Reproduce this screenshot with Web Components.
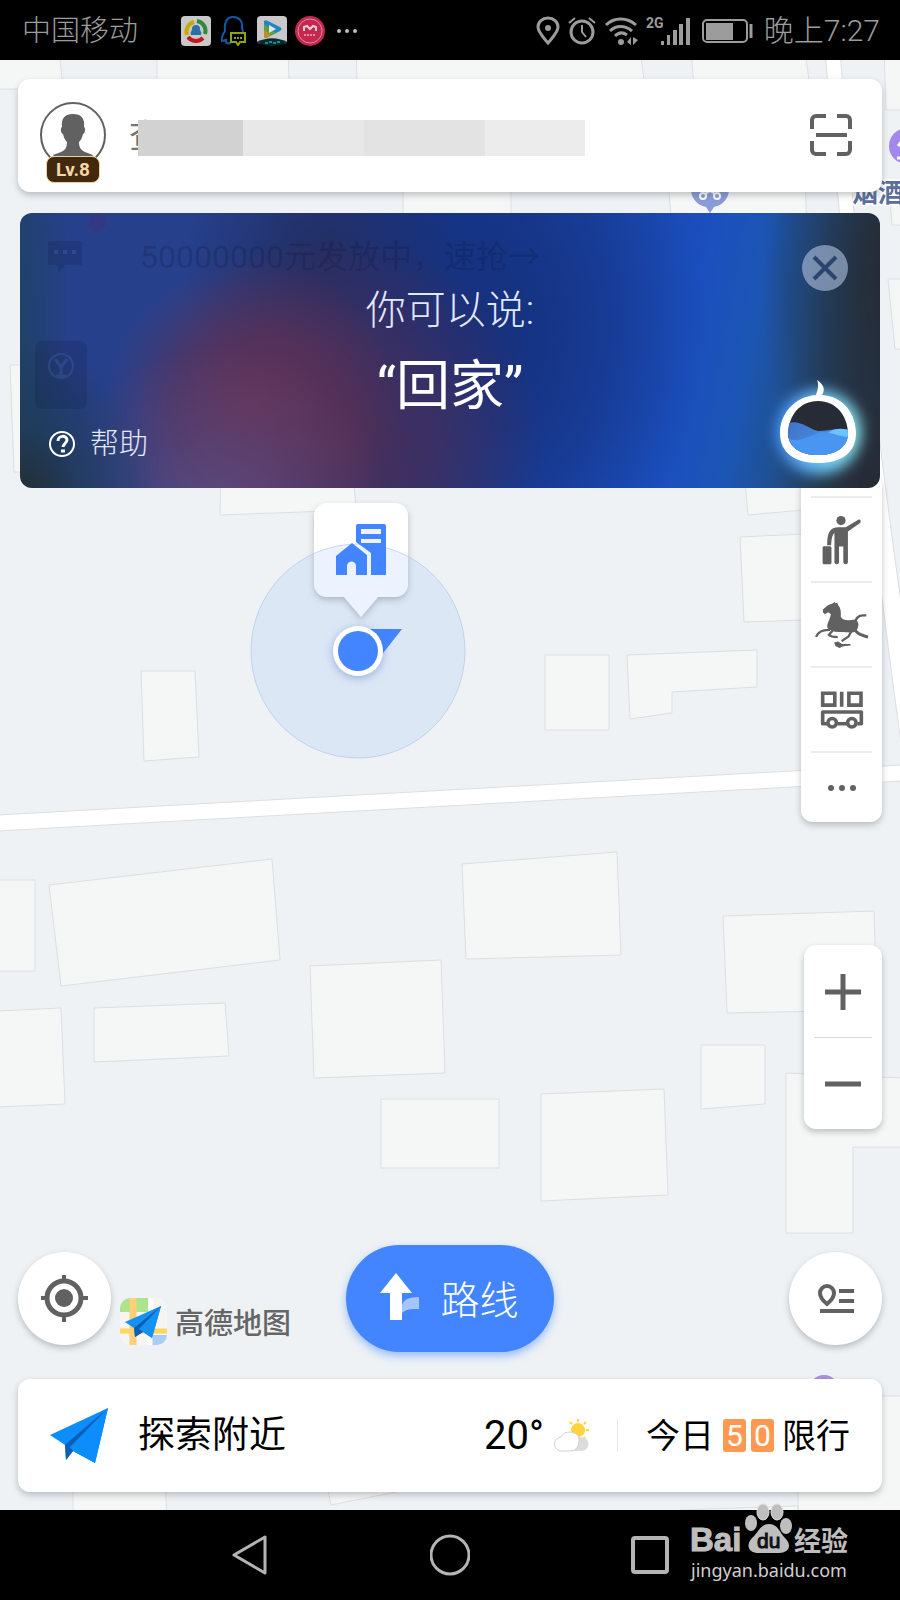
<!DOCTYPE html>
<html lang="zh-CN">
<head>
<meta charset="utf-8">
<meta name="viewport" content="width=device-width, initial-scale=1">
<title>高德地图</title>
<style>
  body {
    margin: 0;
    font-family: Roboto, "Noto Sans CJK SC", sans-serif;
    --ink: #616161;
    --accent: #4285ff;
    --card-shadow: 0 3px 6px rgba(60, 66, 74, 0.3);
  }
</style>
</head>
<body>
<amap-app></amap-app>

<script>
class BaseElement extends HTMLElement {
  constructor() {
    super();
    this.attachShadow({ mode: 'open' });
    const template = document.createElement('template');
    template.innerHTML = this.constructor.markup;
    this.shadowRoot.appendChild(template.content.cloneNode(true));
  }
}

class StatusBar extends BaseElement {
  static markup = `
<style>
  :host {
    display: flex;
    align-items: center;
    justify-content: space-between;
    box-sizing: border-box;
    height: 60px;
    padding: 2px 20px 0 22px;
    background: #000;
    color: #9c9c9c;
    font-size: 29px;
    font-weight: 300;
    line-height: 58px;
  }
  div { display: flex; align-items: center; }
  .apps { gap: 8px; margin-left: 43px; }
  .system { gap: 8px; font-size: 30px; }
  svg { display: block; }
</style>
<div>
  <span>中国移动</span>
  <div class="apps">
    <svg width="30" height="30" viewBox="0 0 30 30">
      <rect width="30" height="30" rx="4" fill="#c9c9c9"/>
      <g fill="none" stroke-width="4">
        <path d="M6 19A10 10 0 0 1 13 6" stroke="#c9a800"/>
        <path d="M16 5A10 10 0 0 1 24 18" stroke="#2f8a3c"/>
        <path d="M22 22A10 10 0 0 1 7 21" stroke="#c3161c"/>
      </g>
      <path d="M15 9a4 4 0 0 1 4 4c0 2 2 3 1 6h-10c-1-3 1-4 1-6a4 4 0 0 1 4-4z" fill="#2a6fa8"/>
    </svg>
    <svg width="30" height="30" viewBox="0 0 30 30">
      <path d="M12 27c-3 1-6 0-5-3l-4 1c-1-4 1-7 3-10C5 6 8 1 14 1s10 4 9 11l1 4" fill="none" stroke="#1258a8" stroke-width="2"/>
      <path d="M12 17h14v9h-5l-2 3-2-3h-5z" fill="#000" stroke="#8da416" stroke-width="2"/>
      <path d="M15 22h2m1 0h2m1 0h2" stroke="#8da416" stroke-width="2"/>
    </svg>
    <svg width="30" height="30" viewBox="0 0 30 30">
      <rect width="30" height="28" rx="4" fill="#c9c9c9"/>
      <path d="M7 6c0-2 2-2 4-1l12 6c2 1 2 3 0 4l-12 6c-2 1-4 1-4-1z" fill="#2384c4"/>
      <path d="M7 8v12c0 2 2 2 4 1l8-4z" fill="#57a43a"/>
      <path d="M7 14v6c0 2 2 2 4 1l3-2z" fill="#c98a25"/>
      <path d="M12 9l7 4-7 4z" fill="#e4e4e4"/>
      <path d="M0 26c10-5 20-5 30 0-4 5-26 5-30 0z" fill="#062a2c"/>
      <path d="M8 27h3m1-1h3m1 1h3m1-1h3" stroke="#198b8b" stroke-width="2"/>
    </svg>
    <svg width="30" height="30" viewBox="0 0 30 30">
      <circle cx="15" cy="15" r="15" fill="#c4284f"/>
      <circle cx="15" cy="15" r="12" fill="none" stroke="#d98aa0"/>
      <path d="M9 15v-4l3-1 3 3 3-3 3 1v4" fill="none" stroke="#e6cdd4" stroke-width="2"/>
      <path d="M9 19h12" stroke="#e08ba2" stroke-width="2" stroke-dasharray="2 1"/>
    </svg>
    <svg width="28" height="30" viewBox="0 0 28 30" fill="#bdbdbd">
      <circle cx="6" cy="15" r="2"/><circle cx="14" cy="15" r="2"/><circle cx="22" cy="15" r="2"/>
    </svg>
  </div>
</div>
<div class="system">
  <svg width="24" height="30" viewBox="0 0 24 30">
    <path d="M12 27C7 21 2 16 2 11a10 9 0 0 1 20 0c0 5-5 10-10 16z" fill="none" stroke="#9c9c9c" stroke-width="3"/>
    <circle cx="12" cy="12" r="3" fill="#9c9c9c"/>
  </svg>
  <svg width="28" height="30" viewBox="0 0 28 30" fill="none" stroke="#9c9c9c" stroke-width="3">
    <circle cx="14" cy="16" r="11"/>
    <path d="M14 9v7l4 5M1 7l6-5M27 7l-6-5" stroke-width="2"/>
  </svg>
  <svg width="34" height="30" viewBox="0 0 34 30" fill="none" stroke="#9c9c9c" stroke-width="3">
    <path d="M2 9c8-8 21-8 30 0M6 15c6-6 15-6 22 0M11 20c4-4 8-4 12-1"/>
    <circle cx="17" cy="26" r="3" fill="#9c9c9c" stroke="none"/>
    <path d="M23 26l4-5v8zM29 21v8l5-5z" fill="#9c9c9c" stroke="none"/>
  </svg>
  <svg width="44" height="30" viewBox="0 0 44 30" fill="#9c9c9c">
    <text x="0" y="12" font-size="14" font-weight="700">2G</text>
    <path d="M15 25h3v4h-3zM21 19h3v10h-3zM27 14h4v15h-4zM33 8h4v21h-4zM40 2h4v27h-4z"/>
  </svg>
  <svg width="58" height="26" viewBox="0 0 58 26">
    <rect x="5" y="2" width="44" height="22" rx="4" fill="none" stroke="#9c9c9c" stroke-width="2"/>
    <rect x="8" y="5" width="27" height="17" fill="#9c9c9c"/>
    <path d="M53 6v14" stroke="#9c9c9c" stroke-width="3"/>
  </svg>
  <span>晚上7:27</span>
</div>`;
}

class MapCanvas extends BaseElement {
  static markup = `
<style>
  :host { display: block; background: #eef2f5; }
  svg { display: block; width: 100%; height: 100%; }
</style>
<svg viewBox="0 60 900 1450" preserveAspectRatio="xMidYMid slice" role="img" aria-label="地图">
  <defs>
    <filter id="soft" x="-50%" y="-50%" width="200%" height="200%">
      <feDropShadow dx="0" dy="3" stdDeviation="3" flood-color="#3c424a" flood-opacity="0.3"/>
    </filter>
    <filter id="glow" x="-50%" y="-50%" width="200%" height="200%">
      <feDropShadow dx="0" dy="2" stdDeviation="5" flood-color="#4a70c0" flood-opacity="0.5"/>
    </filter>
  </defs>
  <!-- buildings -->
  <g fill="#f5f7f6" stroke="#dcdfe2">
    <path d="M-2 50H59L62 78V89H-2z"/>
    <path d="M157 50h131l2 60H157zM356 50h284l8 60H358zM691 50h114l8 60H696z"/>
    <path d="M403 180h108v50H403zM668 180h137l2 50H672zM884 50h20v60h-18zM890 200h12v25h-10z"/>
    <path d="M888 279h14v70h-7zM10 365h20v107H14z"/>
    <path d="M221 470h132l3 40-136 5zM744 470h70v39l-66 6zM740 537l64-3v86l-60 2z"/>
    <path d="M627 655l130-5v37l-85 5v21l-42 6zM545 655h64v75h-64zM141 671h54l4 86-55 4z"/>
    <path d="M-2 880h37v91H-2zM49 885l223-26 8 101-219 26zM462 864l155-12 4 103-155 4z"/>
    <path d="M310 966l131-6 4 113-131 5zM94 1008l131-5 4 53-135 6zM-2 1011l63-3 4 96-67 3z"/>
    <path d="M381 1099h118v69H381zM541 1094l123-5 4 106-127 6z"/>
    <path d="M723 916l151-5 3 99-150 3zM701 1045h64v59l-64 5zM786 1073l116 5v69h-49v86h-67z"/>
    <path d="M73 1480h92l2 40H73zM326 1480l5 25 100-20zM798 1396h104v124H798zM680 1510l118-4v14H680z"/>
  </g>
  <!-- roads -->
  <path d="M825 50h15c10 140 30 330 62 560v140C862 460 840 230 825 50z" fill="#fff" stroke="#dcdfe2"/>
  <path d="M-2 815l702-39 202-11v16l-202 11-702 39z" fill="#fff" stroke="#dcdfe2"/>
  <!-- places -->
  <circle cx="907" cy="146" r="18" fill="#a288ea"/>
  <path d="M898 146l6-7h8M902 146v12M897 158h8" fill="none" stroke="#fff" stroke-width="3"/>
  <text x="852" y="202" font-size="26" font-weight="700" fill="#5a6f9c" stroke="#fff" stroke-width="3" paint-order="stroke">烟酒</text>
  <path d="M691 188a19 18 0 0 0 15 19l4 6 4-6a19 18 0 0 0 15-19z" fill="#8a9cd8"/>
  <g fill="none" stroke="#fff" stroke-width="2">
    <circle cx="703" cy="196" r="3"/><circle cx="717" cy="196" r="3"/><path d="M705 194l5-3 5 3"/>
  </g>
  <circle cx="824" cy="1390" r="15" fill="#a98fe0"/>
  <!-- home callout and own position -->
  <path d="M327 503h68a13 13 0 0 1 13 13v68a13 13 0 0 1-13 13h-17l-17 20-17-20h-17a13 13 0 0 1-13-13v-68a13 13 0 0 1 13-13z" fill="#fff" filter="url(#soft)"/>
  <circle cx="358" cy="651" r="107" fill="#4285ff" fill-opacity="0.1" stroke="#a9c0ea" stroke-opacity="0.6"/>
  <g fill="#4285ff">
    <path d="M356 526a2 2 0 0 1 2-2h26a2 2 0 0 1 2 2v49h-15v-22l-15-11z"/>
    <path d="M336 556l16-13 15 12v20h-11v-9c0-6-9-6-9 0v9h-11z"/>
  </g>
  <path d="M361 529h20v5h-20zM361 539h20v4h-20z" fill="#eef3ff"/>
  <path d="M368 629h34l-22 28z" fill="#4285ff"/>
  <circle cx="358" cy="651" r="25" fill="#fff" filter="url(#glow)"/>
  <circle cx="358" cy="651" r="20" fill="#4285ff"/>
</svg>`;
}

class SearchCard extends BaseElement {
  static markup = `
<style>
  :host {
    display: flex;
    align-items: center;
    box-sizing: border-box;
    height: 113px;
    padding: 2px 29px 0 21px;
    border-radius: 12px;
    background: #fff;
    box-shadow: var(--card-shadow);
  }
  button { padding: 0; border: 0; background: none; font: inherit; }
  .avatar {
    display: flex;
    flex-direction: column;
    align-items: center;
    width: 68px;
    margin-top: 10px;
  }
  .avatar svg { display: block; }
  .level {
    box-sizing: border-box;
    width: 54px;
    height: 27px;
    margin-top: -13px;
    border: 1px solid #f0cfa0;
    border-radius: 8px;
    background: #40290f;
    color: #f7d5a6;
    font-size: 19px;
    font-weight: 700;
    line-height: 25px;
    z-index: 1;
  }
  .field { position: relative; flex: 1; margin: 0 22px; }
  input {
    box-sizing: border-box;
    width: 100%;
    height: 50px;
    padding: 0;
    border: 0;
    background: none;
    font: 400 33px Roboto, "Noto Sans CJK SC", sans-serif;
    color: var(--ink);
  }
  input::placeholder { color: #757575; opacity: 1; }
  /* strip that keeps the last query private */
  .mask { position: absolute; inset: 8px auto 6px 9px; display: flex; }
  .mask i { width: 121px; background: #e8e8e8; }
  .mask i:nth-child(1) { width: 105px; background: #d2d2d2; }
  .mask i:nth-child(3) { background: #e3e3e3; }
  .mask i:nth-child(4) { width: 100px; background: #ececec; }
</style>
<button class="avatar" aria-label="Lv.8">
  <svg width="68" height="68" viewBox="0 0 68 68">
    <circle cx="34" cy="34" r="32" fill="#fff" stroke="#616161" stroke-width="2"/>
    <path d="M34 13c8 0 12 4 11 13 2 1 1 7-1 7-1 4-2 6-4 8 0 6 2 8 6 10l8 3c-8 13-32 13-40 0l8-3c4-2 6-4 6-10-2-2-3-4-4-8-2 0-3-6-1-7-1-9 3-13 11-13z" fill="#616161"/>
  </svg>
  <span class="level">Lv.8</span>
</button>
<div class="field">
  <input type="search" aria-label="搜索" placeholder="查">
  <div class="mask"><i></i><i></i><i></i><i></i></div>
</div>
<button aria-label="扫一扫">
  <svg width="44" height="42" viewBox="0 0 44 42" fill="none" stroke="#616161" stroke-width="4">
    <path d="M3 15V6a4 4 0 0 1 4-4h10M28 2h9a4 4 0 0 1 4 4v9M41 27v9a4 4 0 0 1-4 4h-9M17 40H7a4 4 0 0 1-4-4v-9M7 21h31"/>
  </svg>
</button>`;
}

class VoicePanel extends BaseElement {
  static markup = `
<style>
  :host {
    display: grid;
    grid-template-columns: 1fr auto 1fr;
    position: relative;
    z-index: 1;
    box-sizing: border-box;
    height: 275px;
    margin: 21px 2px 0;
    overflow: hidden;
    border-radius: 12px;
    background:
      radial-gradient(ellipse 16% 60% at 0% 105%, #232c30 0, rgba(30, 58, 80, 0.7) 45%, transparent 100%),
      radial-gradient(ellipse 6% 130% at 0% 40%, rgba(29, 66, 94, 0.8) 0, transparent 100%),
      radial-gradient(ellipse 20% 60% at 23% 108%, rgba(94, 76, 128, 0.9) 0, rgba(94, 76, 128, 0.4) 50%, transparent 100%),
      radial-gradient(ellipse 17% 54% at 27% 70%, rgba(104, 50, 82, 0.9) 0, rgba(98, 49, 84, 0.6) 50%, transparent 100%),
      radial-gradient(ellipse 24% 76% at 37% 84%, rgba(78, 46, 82, 0.95) 0, rgba(74, 46, 86, 0.65) 50%, transparent 100%),
      radial-gradient(ellipse 16% 62% at 35% 18%, rgba(36, 44, 94, 0.9) 0, transparent 100%),
      radial-gradient(ellipse 28% 95% at 52% 45%, rgba(21, 46, 120, 0.9) 0, rgba(21, 48, 124, 0.6) 50%, transparent 100%),
      radial-gradient(ellipse 16% 100% at 102% 20%, rgba(38, 42, 50, 0.95) 0, rgba(36, 50, 70, 0.6) 50%, transparent 100%),
      linear-gradient(100deg, #27408c 0, #27408c 15%, #24408c 30%, #183a92 46%, #183f9c 56%, #1a48b0 68%, #1b4fbe 76%, #1c56b4 83%, #205090 88%, #253748 94%, #272a32 98%);
    color: #e2e8ff;
    font-weight: 300;
  }
  button { padding: 0; border: 0; background: none; color: inherit; font: inherit; }
  button svg { display: block; }
  /* notice shining through the panel */
  .under {
    position: absolute;
    inset: 24px auto auto 120px;
    color: #0c1230;
    font-size: 32px;
    font-weight: 400;
    line-height: 40px;
    opacity: 0.2;
  }
  .under-icons { position: absolute; inset: 0 auto auto 0; opacity: 0.15; }
  .side { display: flex; flex-direction: column; justify-content: flex-end; align-items: flex-start; }
  .right { justify-content: space-between; align-items: flex-end; }
  .help {
    display: flex;
    align-items: center;
    gap: 14px;
    margin: 0 0 24px 29px;
    font-size: 29px;
    line-height: 40px;
  }
  .close {
    width: 46px;
    height: 46px;
    margin: 32px 32px 0 0;
    border-radius: 50%;
    background: rgba(166, 184, 214, 0.65);
  }
  .say { text-align: center; }
  p { margin: 68px 0 0; font-size: 40px; line-height: 60px; }
  p + p { margin-top: 6px; color: #fff; font-size: 54px; font-weight: 400; line-height: 80px; }
</style>
<svg class="under-icons" width="110" height="210" fill="#0c1230">
  <path d="M28 28h34v24H46l-8 8v-8H28z"/><circle cx="77" cy="10" r="9" fill="#7a1060"/>
  <path d="M34 39h4M43 39h4M52 39h4" stroke="#5a78d0" stroke-width="4"/>
  <rect x="15" y="128" width="52" height="68" rx="7"/>
  <circle cx="41" cy="153" r="12" fill="none" stroke="#5a78d0" stroke-width="2"/>
  <path d="M35 146l6 8 6-8M41 154v7M36 163h10" fill="none" stroke="#5a78d0" stroke-width="3"/>
</svg>
<span class="under">50000000元发放中，速抢→</span>
<div class="side">
  <button class="help">
    <svg width="27" height="28" viewBox="0 0 27 28" fill="none" stroke="#fff" stroke-width="2">
      <circle cx="13" cy="14" r="12"/>
      <path d="M9 11c0-6 9-6 9-1 0 3-4 4-4 7" stroke-width="3"/><path d="M12 21h4" stroke-width="3"/>
    </svg>
    帮助
  </button>
</div>
<div class="say">
  <p>你可以说:</p>
  <p>“回家”</p>
</div>
<div class="side right">
  <button class="close" aria-label="关闭">
    <svg width="46" height="46" viewBox="0 0 46 46"><path d="M12 12l22 22M34 12L12 34" stroke="#2c456e" stroke-width="4"/></svg>
  </button>
  <button aria-label="语音助手">
    <svg width="126" height="113" viewBox="0 0 126 113">
      <defs>
        <filter id="blur" x="-40%" y="-40%" width="180%" height="180%"><feGaussianBlur stdDeviation="7"/></filter>
        <linearGradient id="halo"><stop offset="0" stop-color="#4a96ff"/><stop offset="1" stop-color="#8ff0f0"/></linearGradient>
        <linearGradient id="wave" y2="0.7"><stop offset="0" stop-color="#3f6fc4"/><stop offset="1" stop-color="#4f9bf5"/></linearGradient>
        <clipPath id="face"><path d="M64 26c18 0 29 14 30 32 0 14-12 22-30 22s-30-8-30-22c1-18 12-32 30-32z"/></clipPath>
      </defs>
      <circle cx="65" cy="57" r="42" fill="url(#halo)" filter="url(#blur)"/>
      <path d="M62 20c2-6 3-10 1-15 6 4 9 9 5 15 21 1 34 19 34 38 0 20-15 30-38 30s-38-10-38-30c0-19 14-36 36-38z" fill="#fff"/>
      <g clip-path="url(#face)">
        <path d="M20 20h90v70H20z" fill="#262b36"/>
        <path d="M30 50c14-8 24 4 34 6 10 0 20-4 32 0v30H30z" fill="url(#wave)"/>
        <path d="M74 58c8-6 14-4 24-3v12z" fill="#6cc4ff"/>
        <path d="M30 62c16 8 24-2 38-5 10 0 20 6 30 5v25H30z" fill="#4b95f2"/>
      </g>
    </svg>
  </button>
</div>`;
}

class ToolBar extends BaseElement {
  static markup = `
<style>
  :host {
    display: flex;
    flex-direction: column;
    align-self: flex-end;
    box-sizing: border-box;
    border-radius: 12px;
    background: #fff;
    box-shadow: var(--card-shadow);
  }
  ::slotted(button) {
    display: grid;
    place-items: center;
    width: 61px;
    height: 85px;
    margin: 0 10px;
    padding: 0;
    border: 0;
    border-top: 2px solid #ececec;
    background: none;
  }
  ::slotted(button:last-child) { height: 71px; }
  :host([compact]) ::slotted(button) { width: 58px; height: 92px; border-top-width: 1px; border-top-color: #dcdcdc; }
  :host([compact]) ::slotted(button:first-child) { border-top-color: transparent; }
</style>
<slot></slot>`;
}

class RoundButton extends BaseElement {
  static markup = `
<style>
  :host { display: block; }
  button {
    display: grid;
    place-items: center;
    width: 93px;
    height: 93px;
    padding: 0;
    border: 0;
    border-radius: 50%;
    background: #fff;
    box-shadow: var(--card-shadow);
  }
</style>
<button><slot></slot></button>`;

  connectedCallback() {
    this.shadowRoot.querySelector('button').setAttribute('aria-label', this.getAttribute('label'));
  }
}

class RouteButton extends BaseElement {
  static markup = `
<style>
  :host { display: block; }
  button {
    display: flex;
    align-items: center;
    gap: 20px;
    height: 107px;
    padding: 0 35px 3px 34px;
    border: 0;
    border-radius: 54px;
    background: var(--accent);
    box-shadow: 0 4px 8px rgba(66, 133, 255, 0.5);
    color: #fff;
    font: 300 39px Roboto, "Noto Sans CJK SC", sans-serif;
  }
</style>
<button>
  <svg width="40" height="48" viewBox="0 0 40 48">
    <path d="M22 40V34c0-6 5-10 17-10v12c-8 0-13 0-17 4z" fill="#a5c5ff"/>
    <path d="M16 0l16 20H22v27H10V20H0z" fill="#fff"/>
  </svg>
  <slot></slot>
</button>`;
}

class MapBrand extends BaseElement {
  static markup = `
<style>
  :host {
    display: flex;
    align-items: flex-end;
    gap: 8px;
    color: #666;
    font-size: 29px;
    font-weight: 500;
    line-height: 42px;
  }
</style>
<svg width="47" height="47" viewBox="0 0 47 47">
  <defs><clipPath id="tile"><rect width="47" height="47" rx="10"/></clipPath></defs>
  <g clip-path="url(#tile)">
    <path d="M0 0h47v47H0z" fill="#f7f5f1"/>
    <path d="M0 0h28v14H0z" fill="#ade38c"/>
    <path d="M33 37h14v10H30z" fill="#a9cdf5"/>
    <path d="M0 33h47" stroke="#ffd75e" stroke-width="5"/>
    <path d="M13 0v47" stroke="#ffcf7a" stroke-width="7"/>
    <path d="M31 0v14M30 38v9" stroke="#fff" stroke-width="5"/>
  </g>
  <path d="M5 24L41 8 32 40l-9-6-8 5-1-9z" fill="#1590f5"/>
  <path d="M14 30L41 8 23 34l-8 5z" fill="#0b5fb0"/>
  <path d="M19 31L41 8 32 40z" fill="#1590f5"/>
</svg>
<span>高德地图</span>`;
}

class ExploreCard extends BaseElement {
  static markup = `
<style>
  :host {
    display: flex;
    align-items: center;
    box-sizing: border-box;
    height: 113px;
    margin-top: 27px;
    padding: 0 32px;
    border-radius: 12px;
    background: #fff;
    box-shadow: var(--card-shadow);
    color: #000;
    font-size: 34px;
    line-height: 50px;
  }
  a { display: flex; align-items: center; color: inherit; text-decoration: none; }
  .explore { flex: 1; gap: 30px; font-size: 37px; }
  .weather { gap: 10px; padding-right: 28px; font-size: 40px; }
  .limit { padding-left: 28px; border-left: 1px solid #e8e8e8; line-height: 30px; }
  .limit b {
    width: 23px;
    margin-left: 5px;
    border-radius: 3px;
    background: #ff9850;
    color: #fff;
    font-size: 30px;
    font-weight: 400;
    line-height: 33px;
    text-align: center;
  }
  .limit b:first-of-type { margin-left: 9px; }
  .limit b:last-of-type { margin-right: 8px; }
</style>
<a class="explore" href="#explore">
  <svg width="58" height="55" viewBox="0 0 58 55">
    <path d="M0 27L58 0 45 55 23 43l-7 9-1-15z" fill="#0c8dfb"/>
    <path d="M15 37L58 0 23 43l-7 9z" fill="#0a5fb4"/>
    <path d="M20 39L58 0 45 55 23 43z" fill="#0c8dfb"/>
  </svg>
  <span>探索附近</span>
</a>
<a class="weather" href="#weather">
  <span>20°</span>
  <svg width="35" height="34" viewBox="0 0 35 34">
    <circle cx="24" cy="11" r="7" fill="#ffd43c"/>
    <path d="M24 0v3M32 3l-2 2M16 3l2 2M35 11h-3M31 20l-1-2" stroke="#ffd43c" stroke-width="2"/>
    <path d="M14 32h13a7 7 0 0 0 1-14c-9 0-14 4-14 14z" fill="#dcdcdc"/>
    <path d="M8 32a7 7 0 0 1-1-14c2-7 18-7 18 3 0 6-3 11-8 11z" fill="#fff" stroke="#d0d0d0"/>
  </svg>
</a>
<a class="limit" href="#limit"><span>今日</span><b>5</b><b>0</b><span>限行</span></a>`;
}

class NavBar extends BaseElement {
  static markup = `
<style>
  :host {
    display: flex;
    align-items: center;
    justify-content: center;
    gap: 160px;
    position: relative;
    height: 90px;
    background: #000;
  }
  button { padding: 0; border: 0; background: none; }
  svg { display: block; }
  .mark { position: absolute; right: 46px; bottom: 16px; }
</style>
<button aria-label="返回"><svg width="40" height="42" viewBox="0 0 40 42"><path d="M35 3v36L4 21z" fill="none" stroke="#b4b4b4" stroke-width="3" stroke-linejoin="round"/></svg></button>
<button aria-label="主页"><svg width="40" height="42" viewBox="0 0 40 42"><circle cx="20" cy="21" r="19" fill="none" stroke="#b4b4b4" stroke-width="3"/></svg></button>
<button aria-label="最近"><svg width="40" height="42" viewBox="0 0 40 42"><rect x="3" y="4" width="34" height="34" rx="2" fill="none" stroke="#b4b4b4" stroke-width="4"/></svg></button>
<svg class="mark" width="164" height="82" viewBox="0 0 164 82" fill="#bebebe">
  <text x="0" y="49" font-family="Liberation Sans" font-size="33" font-weight="700" stroke="#bebebe">Bai</text>
  <ellipse cx="61" cy="21" rx="6" ry="8"/><ellipse cx="73" cy="10" rx="6" ry="8" stroke="#ddd"/>
  <ellipse cx="87" cy="10" rx="6" ry="8" stroke="#ddd"/><ellipse cx="96" cy="24" rx="6" ry="8"/>
  <path d="M79 22c9 0 11 9 16 14 8 8 3 15-6 15H69c-10 0-14-7-7-15 6-5 8-14 17-14z"/>
  <text x="67" y="46" font-family="Liberation Sans" font-size="21" fill="#111" stroke="#111">du</text>
  <text x="104" y="49" font-family="Noto Sans CJK SC" font-size="27" font-weight="700">经验</text>
  <text x="1" y="75" font-family="Noto Sans" font-size="18" fill="#d0d0d0">jingyan.baidu.com</text>
</svg>`;
}

class AmapApp extends BaseElement {
  static markup = `
<style>
  :host { display: flex; flex-direction: column; min-height: 100vh; }
  main { flex: 1; display: flex; flex-direction: column; position: relative; padding: 19px 18px 18px; }
  main > * { position: relative; }
  map-canvas { position: absolute; inset: 0; overflow: hidden; }
  .tools { margin-top: -12px; }
  .tools button:first-child { height: 20px; }
  .zoom { margin-top: 123px; }
  .bottom {
    display: grid;
    grid-template-columns: 1fr auto 1fr;
    align-items: center;
    margin-top: auto;
  }
  .left { display: flex; align-items: flex-end; gap: 9px; }
  .bottom > :last-child { justify-self: end; }
  svg { display: block; }
</style>
<status-bar></status-bar>
<main>
  <map-canvas></map-canvas>
  <search-card></search-card>
  <voice-panel></voice-panel>
  <tool-bar class="tools">
    <button aria-label="图层"></button>
    <button aria-label="打车">
      <svg width="40" height="50" viewBox="370 108 120 152" fill="#616161">
        <circle cx="427" cy="125" r="14"/>
        <path d="M371 207a5 5 0 0 1 5-4h17a5 5 0 0 1 5 4v46a5 5 0 0 1-5 5h-17a5 5 0 0 1-5-5z"/>
        <path d="M385 200c0-30 4-54 32-55h24l40-23c5-1 8 7 4 10l-37 26v94c0 8-13 8-14 0v-48h-13v48c0 8-14 8-14 0v-89c-8 8-9 22-10 37z"/>
      </svg>
    </button>
    <button aria-label="景区">
      <svg width="56" height="48" viewBox="338 364 168 146" fill="#616161">
        <path d="M364 390l14-12 18-8 3-4 3 5 6-2 2 7c8 8 10 22 8 36 6 12 24 12 44 8 10 4 12 16 8 26-4 10-10 14-18 14l-32-2c-16 2-34-2-42-12-4-12 8-26 10-42l-8-6-10 6-6-6z"/>
        <g fill="none" stroke="#616161" stroke-width="7">
          <path d="M462 425c8-17 18-19 34-17M386 452c-20-1-36 4-43 21M394 454l-12 13c6 7 14 7 27 7M450 456l-8 16-21 14"/>
          <path d="M460 448c8 18 24 20 41 26" stroke-width="9"/>
        </g>
        <path d="M398 490l12-3 12 8h26v4l-22 3-12 5-12-6z"/>
      </svg>
    </button>
    <button aria-label="实时公交">
      <svg width="44" height="38" viewBox="362 634 132 116" fill="none" stroke="#616161" stroke-width="11">
        <path d="M369 641h37v36h-37zM449 641h37v36h-37zM427 636v46"/>
        <path d="M382 734h-13v-36h118v36h-12M414 734h28" stroke-linejoin="round"/>
        <circle cx="398" cy="731" r="13"/><circle cx="458" cy="731" r="13"/>
      </svg>
    </button>
    <button aria-label="更多">
      <svg width="30" height="8" viewBox="0 0 30 8" fill="#616161"><circle cx="4" cy="4" r="3"/><circle cx="15" cy="4" r="3"/><circle cx="26" cy="4" r="3"/></svg>
    </button>
  </tool-bar>
  <tool-bar class="zoom" compact>
    <button aria-label="放大"><svg width="36" height="36" viewBox="0 0 36 36" stroke="#616161" stroke-width="5"><path d="M0 18h36M18 0v36"/></svg></button>
    <button aria-label="缩小"><svg width="36" height="36" viewBox="0 0 36 36" stroke="#616161" stroke-width="5"><path d="M0 18h36"/></svg></button>
  </tool-bar>
  <div class="bottom">
    <div class="left">
      <round-button label="定位">
        <svg width="47" height="47" viewBox="0 0 47 47" fill="none" stroke="#616161" stroke-width="5">
          <circle cx="23" cy="23" r="17"/><circle cx="23" cy="23" r="9" fill="#616161" stroke="none"/>
          <path d="M23 0v7M23 40v7M0 23h7M40 23h7" stroke-width="4"/>
        </svg>
      </round-button>
      <map-brand></map-brand>
    </div>
    <route-button>路线</route-button>
    <round-button label="收藏">
      <svg width="38" height="30" viewBox="0 0 38 30" fill="none" stroke="#616161">
        <path d="M10 20c-5-4-7-7-7-11a7 7 0 0 1 14 0c0 4-2 7-7 11z" stroke-width="4"/>
        <path d="M22 7h15M22 17h15M3 27h34" stroke-width="4"/>
      </svg>
    </round-button>
  </div>
  <explore-card></explore-card>
</main>
<nav-bar></nav-bar>`;
}

customElements.define('status-bar', StatusBar);
customElements.define('map-canvas', MapCanvas);
customElements.define('search-card', SearchCard);
customElements.define('voice-panel', VoicePanel);
customElements.define('tool-bar', ToolBar);
customElements.define('round-button', RoundButton);
customElements.define('route-button', RouteButton);
customElements.define('map-brand', MapBrand);
customElements.define('explore-card', ExploreCard);
customElements.define('nav-bar', NavBar);
customElements.define('amap-app', AmapApp);
</script>
</body>
</html>
